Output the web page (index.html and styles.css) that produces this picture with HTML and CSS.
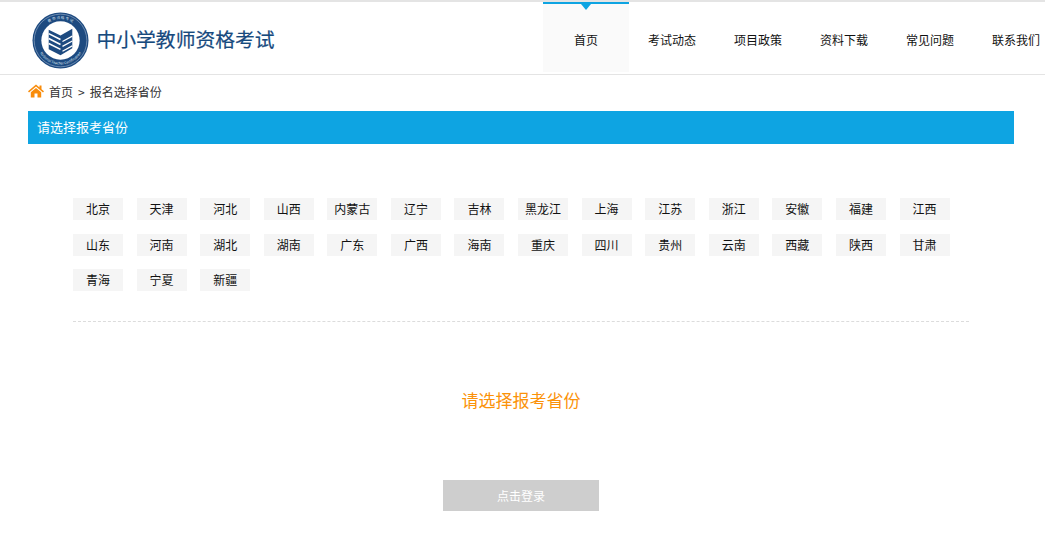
FILE: index.html
```html
<!DOCTYPE html>
<html lang="zh-CN">
<head>
    <meta charset="UTF-8">
    <meta name="viewport" content="width=device-width, initial-scale=1.0">
    <title>中小学教师资格考试</title>
    <link rel="stylesheet" href="styles.css">
</head>
<body>
    <!-- Header -->
    <div class="header">
        <div class="logo">
            <svg class="logo-mark" width="57" height="57" viewBox="0 0 58 58">
                <defs>
                    <path id="ringTop" d="M7 29a22 22 0 0 1 44 0"/>
                    <path id="ringBottom" d="M4.500 29a24.500 24.500 0 0 0 49 0"/>
                </defs>
                <circle cx="29" cy="29" r="28.500" fill="#1d4a80"/>
                <circle cx="29" cy="29" r="26.800" fill="none" stroke="#8ea6c4" stroke-width=".7"/>
                <circle cx="29" cy="29" r="19.500" fill="#fff"/>
                <text class="ring-text"><textPath href="#ringTop" startOffset="50%" text-anchor="middle">教 师 资 格 考 试</textPath></text>
                <text class="ring-text"><textPath href="#ringBottom" startOffset="50%" text-anchor="middle">National Teacher Certification</textPath></text>
                <path d="M17 18l12 6 12-7v20l-12 7-12-6z" fill="#1d4a80"/>
                <path d="M17 22l12 6M17 27l12 6M17 32l12 6" stroke="#fff" stroke-width="1.600" fill="none"/>
                <path d="M31 30l10-5.500M31 35l10-5.500M31 40l10-5.500" stroke="#fff" stroke-width="1.300" fill="none"/>
            </svg>
            <span class="logo-title">中小学教师资格考试</span>
        </div>
        <div class="nav">
            <a class="active" href="#">首页</a>
            <a href="#">考试动态</a>
            <a href="#">项目政策</a>
            <a href="#">资料下载</a>
            <a href="#">常见问题</a>
            <a href="#">联系我们</a>
        </div>
    </div>

    <!-- Breadcrumb -->
    <div class="crumb">
        <svg class="home-icon" width="16" height="14" viewBox="0 0 16 14">
            <path d="M8 .5L0 7.300l1 1.100L8 2.600l7 5.800 1-1.100-2.500-2.100V1.500h-2v2.100z" fill="#f98c0a"/>
            <path d="M8 4L2.800 8.300V13.500h3.700V9.500h3v4h3.700V8.300z" fill="#f98c0a"/>
        </svg>
        <a href="#">首页</a>
        <span class="crumb-sep">&gt;</span>
        <span>报名选择省份</span>
    </div>

    <!-- Province Panel -->
    <div class="panel">
        <div class="panel-title">请选择报考省份</div>
        <div class="provinces">
            <a href="#">北京</a>
            <a href="#">天津</a>
            <a href="#">河北</a>
            <a href="#">山西</a>
            <a href="#">内蒙古</a>
            <a href="#">辽宁</a>
            <a href="#">吉林</a>
            <a href="#">黑龙江</a>
            <a href="#">上海</a>
            <a href="#">江苏</a>
            <a href="#">浙江</a>
            <a href="#">安徽</a>
            <a href="#">福建</a>
            <a href="#">江西</a>
            <a href="#">山东</a>
            <a href="#">河南</a>
            <a href="#">湖北</a>
            <a href="#">湖南</a>
            <a href="#">广东</a>
            <a href="#">广西</a>
            <a href="#">海南</a>
            <a href="#">重庆</a>
            <a href="#">四川</a>
            <a href="#">贵州</a>
            <a href="#">云南</a>
            <a href="#">西藏</a>
            <a href="#">陕西</a>
            <a href="#">甘肃</a>
            <a href="#">青海</a>
            <a href="#">宁夏</a>
            <a href="#">新疆</a>
        </div>
        <div class="notice">请选择报考省份</div>
        <button class="login-btn" disabled>点击登录</button>
    </div>
</body>
</html>
```

FILE: styles.css
```css
/* General Reset */
* {
    margin: 0;
    padding: 0;
    box-sizing: border-box;
    font-family: "Noto Sans CJK SC", "Liberation Sans", sans-serif;
}

html, body {
    height: 542px;
    overflow: hidden;
}

body {
    background: #fff;
    color: #222;
    font-size: 12px;
    border-top: 2px solid #e4e4e4;
}

a {
    color: inherit;
    text-decoration: none;
}

/* Header */
.header {
    display: flex;
    height: 73px;
    border-bottom: 1px solid #e4e4e4;
}

.logo {
    display: flex;
    align-items: center;
    width: 543px;
    padding: 0 0 0 32px;
    flex-shrink: 0;
}

.logo-mark {
    flex-shrink: 0;
    margin-top: 5px;
}

.ring-text {
    font-size: 3.600px;
    fill: #dfe7f1;
}

.logo-title {
    margin: 0 0 0 7.500px;
    font-size: 19.800px;
    color: #174a7e;
    -webkit-text-stroke: 0.2px #174a7e;
    white-space: nowrap;
}

.nav {
    display: flex;
    height: 70px;
    flex-shrink: 0;
}

.nav a {
    position: relative;
    width: 86px;
    flex-shrink: 0;
    padding-top: 6px;
    border-top: 2px solid transparent;
    line-height: 60px;
    text-align: center;
    color: #111;
}

.nav a.active {
    background: #fafafa;
    border-top-color: #0ea4e2;
}

.nav a.active::after {
    content: "";
    position: absolute;
    top: 0;
    left: 38px;
    border-style: solid;
    border-width: 6px 5.500px 0;
    border-color: #0ea4e2 transparent transparent;
}

/* Breadcrumb */
.crumb {
    display: flex;
    align-items: center;
    height: 36px;
    padding: 0 0 3px 28px;
    color: #333;
}

.home-icon {
    margin: -2px 5px 0 0;
}

.crumb-sep {
    margin: 0 5px;
}

/* Province Panel */
.panel {
    display: flex;
    flex-direction: column;
    align-items: center;
    margin: 0 31px 0 28px;
}

.panel-title {
    width: 100%;
    height: 33px;
    padding-left: 9px;
    background: #0ea4e2;
    color: #fff;
    font-size: 13px;
    line-height: 32px;
}

.provinces {
    display: flex;
    flex-wrap: wrap;
    align-content: flex-start;
    row-gap: 13.500px;
    align-self: flex-start;
    width: 896px;
    height: 124px;
    margin: 54px 0 0 45px;
    padding-right: 4px;
    border-bottom: 1px dashed #dcdcdc;
}

.provinces a {
    width: 50px;
    height: 22px;
    margin-right: 13.580px;
    background: #f5f5f5;
    line-height: 21px;
    text-align: center;
    color: #111;
}

.notice {
    margin-top: 65px;
    font-size: 17px;
    line-height: 26px;
    color: #fb9209;
}

.login-btn {
    width: 156px;
    height: 31px;
    margin: 67px 0 0 0;
    border: none;
    background: #cecece;
    color: #fff;
    font-size: 12px;
    line-height: 29px;
}
```
